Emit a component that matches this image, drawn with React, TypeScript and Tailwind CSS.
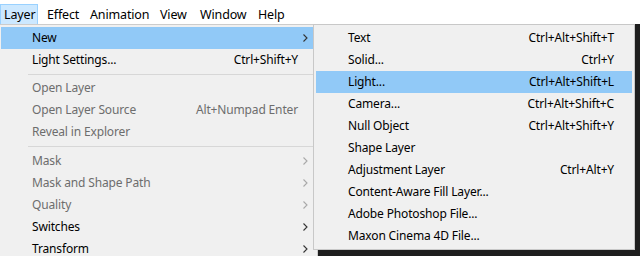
import React from "react";

type Item =
  | { sep: number }
  | { label: string; shortcut?: string; sub?: boolean; disabled?: boolean; active?: boolean };

const left: Item[] = [
  { label: "New", sub: true, active: true },
  { label: "Light Settings...", shortcut: "Ctrl+Shift+Y" },
  { sep: 6 },
  { label: "Open Layer", disabled: true },
  { label: "Open Layer Source", shortcut: "Alt+Numpad Enter", disabled: true },
  { label: "Reveal in Explorer", disabled: true },
  { sep: 7 },
  { label: "Mask", sub: true, disabled: true },
  { label: "Mask and Shape Path", sub: true, disabled: true },
  { label: "Quality", sub: true, disabled: true },
  { label: "Switches", sub: true },
  { label: "Transform", sub: true },
];

const right: { label: string; shortcut?: string; active?: boolean }[] = [
  { label: "Text", shortcut: "Ctrl+Alt+Shift+T" },
  { label: "Solid...", shortcut: "Ctrl+Y" },
  { label: "Light...", shortcut: "Ctrl+Alt+Shift+L", active: true },
  { label: "Camera...", shortcut: "Ctrl+Alt+Shift+C" },
  { label: "Null Object", shortcut: "Ctrl+Alt+Shift+Y" },
  { label: "Shape Layer" },
  { label: "Adjustment Layer", shortcut: "Ctrl+Alt+Y" },
  { label: "Content-Aware Fill Layer..." },
  { label: "Adobe Photoshop File..." },
  { label: "Maxon Cinema 4D File..." },
];

function Chevron({ light }: { light?: boolean }) {
  return (
    <svg width="5" height="8" viewBox="0 0 5 8" className="shrink-0">
      <path d="M0.5 0.5 L4 4 L0.5 7.5" fill="none" stroke={light ? "#a8a8a8" : "#333"} strokeWidth="1.1" />
    </svg>
  );
}

export default function App() {
  const font = { fontFamily: '"Noto Sans", "Liberation Sans", sans-serif' };
  return (
    <div className="relative w-[640px] h-[256px] overflow-hidden bg-[#1e1e1e] text-[12px] text-black tracking-[-0.15px]" style={font}>
      <div className="flex h-[24px] bg-white items-end text-[12.5px]">
        <div className="w-[38px] h-[20px] flex items-center pl-[3px] pt-[2px] bg-[#cce8ff] border border-[#99d1ff] border-b-0">
          Layer
        </div>
        <div className="w-[45px] h-[20px] flex items-center pl-[9px] pt-[2px]">Effect</div>
        <div className="w-[70px] h-[20px] flex items-center pl-[7px] pt-[2px]">Animation</div>
        <div className="w-[40px] h-[20px] flex items-center pl-[7px] pt-[2px]">View</div>
        <div className="w-[58px] h-[20px] flex items-center pl-[7px] pt-[2px]">Window</div>
        <div className="w-[50px] h-[20px] flex items-center pl-[7px] pt-[2px]">Help</div>
        <div className="flex-1" />
      </div>
      <div className="flex">
        <div className="w-[318px] h-[232px] bg-[#f0f0f0] border-t border-[#cccccc] border-r pt-[2px] pl-[1px] pr-[3px]">
          {left.map((it, i) =>
            "sep" in it ? (
              <div key={i} className={"flex items-center pl-[27px] " + (it.sep === 6 ? "h-[6px]" : "h-[7px]")}>
                <div className="h-px w-full bg-[#d7d7d7]" />
              </div>
            ) : (
              <div
                key={i}
                className={
                  "h-[22px] flex items-center pl-[31px] pr-[6px] " +
                  (it.active ? "bg-[#91c9f7] " : "") +
                  (it.disabled ? "text-[#6d6d6d]" : "text-black")
                }
              >
                <span className="flex-1">{it.label}</span>
                {it.shortcut && <span className="mr-[10px]">{it.shortcut}</span>}
                {it.sub && <Chevron light={it.disabled} />}
              </div>
            )
          )}
        </div>
        <div className="flex-1" />
      </div>
      <div className="absolute left-[313px] top-[24px] w-[322px] h-[226px] bg-[#f0f0f0] border border-[#c8c8c8] pt-[2px] px-[2px]">
        {right.map((it, i) => (
          <div
            key={i}
            className={"h-[22px] flex items-center pl-[32px] pr-[18px] " + (it.active ? "bg-[#91c9f7]" : "")}
          >
            <span className="flex-1">{it.label}</span>
            {it.shortcut && <span>{it.shortcut}</span>}
          </div>
        ))}
      </div>
    </div>
  );
}
